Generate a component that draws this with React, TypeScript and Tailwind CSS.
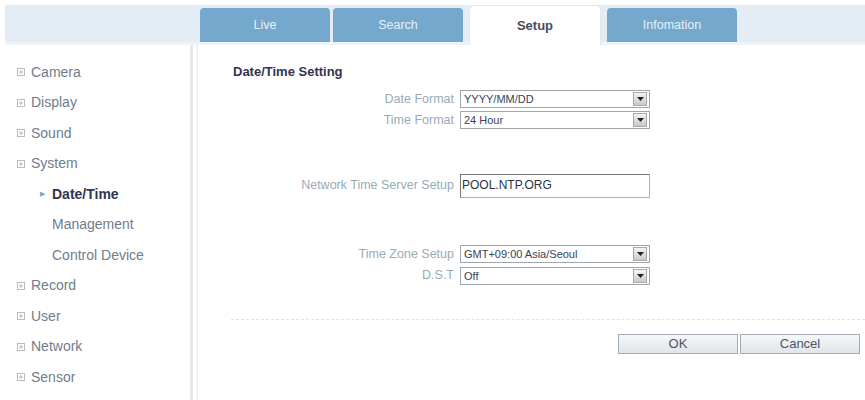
import React from 'react';

const menu = [
  { label: 'Camera' },
  { label: 'Display' },
  { label: 'Sound' },
  { label: 'System', children: ['Date/Time', 'Management', 'Control Device'] },
  { label: 'Record' },
  { label: 'User' },
  { label: 'Network' },
  { label: 'Sensor' },
];

const tabs = ['Live', 'Search', 'Setup', 'Infomation'];

function PlusBox() {
  return (
    <svg width="8" height="8" viewBox="0 0 8 8" className="shrink-0">
      <rect x="0.5" y="0.5" width="7" height="7" fill="none" stroke="#b4bcc4" />
      <path d="M2 4h4M4 2v4" stroke="#b4bcc4" strokeWidth="1" />
    </svg>
  );
}

function Select({ value }: { value: string }) {
  return (
    <div className="w-[190px] h-[18px] flex items-stretch border border-[#9ea6ae] bg-white">
      <span className="flex-1 pl-[3px] text-[11px] leading-[16px] text-[#3a3f55] truncate">{value}</span>
      <span className="w-[14px] my-[1px] mr-[2px] flex items-center justify-center bg-gradient-to-b from-[#f4f4f4] to-[#c9c9c9] border border-[#a9a9a9]">
        <svg width="7" height="4" viewBox="0 0 7 4">
          <path d="M0 0h7L3.5 4z" fill="#222" />
        </svg>
      </span>
    </div>
  );
}

function Row({ label, children, className = '' }: { label: string; children: React.ReactNode; className?: string }) {
  return (
    <div className={`flex items-center ${className}`}>
      <span className="w-[222px] pr-[1px] text-right text-[12.5px] text-[#98aab8]">{label}</span>
      <div className="ml-[5px]">{children}</div>
    </div>
  );
}

export default function App() {
  return (
    <div className="w-[865px] h-[400px] bg-white overflow-hidden" style={{ fontFamily: '"Liberation Sans", Arial, sans-serif' }}>
      <div className="pt-[5px] pl-[5px]">
        <div className="h-[40px] bg-[#e4edf5] border-b-[3px] border-[#eef3f7] flex items-end pl-[195px] gap-[3px]">
          {tabs.map((t) =>
            t === 'Setup' ? (
              <div
                key={t}
                className="w-[132px] h-[40px] mx-[3px] -mb-[3px] bg-white border border-b-0 border-[#dfe6ec] rounded-t-[5px] flex items-center justify-center text-[13px] font-bold text-[#4a4a5a]"
              >
                {t}
              </div>
            ) : (
              <div
                key={t}
                className="w-[130px] h-[34px] bg-[#74a8cc] rounded-t-[4px] flex items-center justify-center text-[12.5px] text-[#e6f0f8]"
              >
                {t}
              </div>
            )
          )}
        </div>
      </div>
      <div className="flex h-[355px]">
        <aside className="w-[193px] border-r-[3px] border-[#e3e6ea] pt-[12px]">
          {menu.map((m) => (
            <div key={m.label}>
              <div className="h-[30.5px] flex items-center pl-[17px] gap-[6px] text-[14px] text-[#707d8c]">
                <PlusBox />
                <span>{m.label}</span>
              </div>
              {m.children?.map((c, i) => (
                <div key={c} className="h-[30.5px] flex items-center pl-[40px] text-[14px]">
                  {i === 0 ? (
                    <>
                      <span className="w-[12px] text-[7px] text-[#7aa6c6]">▶</span>
                      <span className="font-bold text-[#33334f]">{c}</span>
                    </>
                  ) : (
                    <span className="pl-[12px] text-[#707d8c]">{c}</span>
                  )}
                </div>
              ))}
            </div>
          ))}
        </aside>
        <main className="flex-1 ml-[3px] border-l-[2px] border-[#eef0f3] pl-[35px] pt-[19px]">
          <h1 className="text-[13px] leading-[16px] font-bold text-[#33334f]">Date/Time Setting</h1>
          <Row label="Date Format" className="mt-[10px]">
            <Select value="YYYY/MM/DD" />
          </Row>
          <Row label="Time Format" className="mt-[2px]">
            <Select value="24 Hour" />
          </Row>
          <Row label="Network Time Server Setup" className="mt-[44px]">
            <div className="w-[190px] h-[24px] border border-[#a8b0b8] border-t-[#6f767d] border-l-[#6f767d] bg-white pl-[1px] text-[12px] leading-[20px] text-[#2e3340]">
              POOL.NTP.ORG
            </div>
          </Row>
          <Row label="Time Zone Setup" className="mt-[47px]">
            <Select value="GMT+09:00 Asia/Seoul" />
          </Row>
          <Row label="D.S.T" className="mt-[3px]">
            <Select value="Off" />
          </Row>
          <div className="mt-[34px] -ml-[2px] border-t border-dashed border-[#e2e5e8]" />
          <div className="mt-[14px] flex justify-end pr-[5px] gap-[2px]">
            {['OK', 'Cancel'].map((b) => (
              <button
                key={b}
                className="w-[120px] h-[20px] border border-[#a3acb5] bg-gradient-to-b from-[#f6f8fa] to-[#dfe5ea] text-[13px] leading-[18px] text-[#4a5566]"
              >
                {b}
              </button>
            ))}
          </div>
        </main>
      </div>
    </div>
  );
}
